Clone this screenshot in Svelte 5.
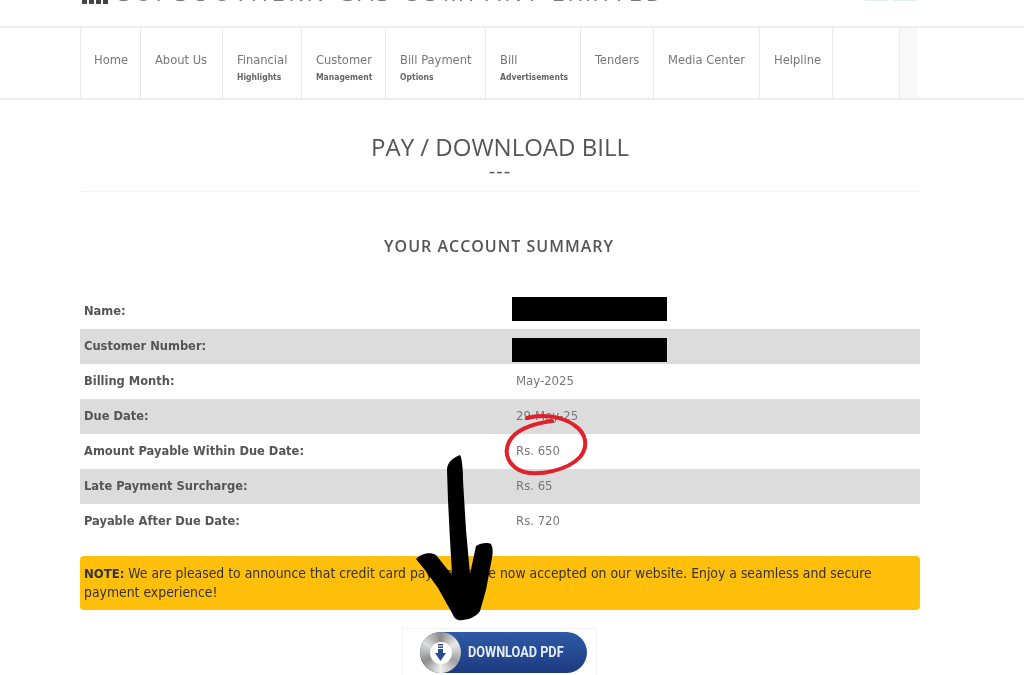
<script>
  const nav = [
    { title: 'Home', width: 60 },
    { title: 'About Us', width: 82 },
    { title: 'Financial', sub: 'Highlights', width: 79 },
    { title: 'Customer', sub: 'Management', width: 84 },
    { title: 'Bill Payment', sub: 'Options', width: 100 },
    { title: 'Bill', sub: 'Advertisements', width: 95 },
    { title: 'Tenders', width: 73 },
    { title: 'Media Center', width: 106 },
    { title: 'Helpline', width: 73 },
    { title: '', width: 67 }
  ];

  const rows = [
    { label: 'Name:', hidden: true },
    { label: 'Customer Number:', hidden: true },
    { label: 'Billing Month:', value: 'May-2025' },
    { label: 'Due Date:', value: '29-May-25' },
    { label: 'Amount Payable Within Due Date:', value: 'Rs. 650' },
    { label: 'Late Payment Surcharge:', value: 'Rs. 65' },
    { label: 'Payable After Due Date:', value: 'Rs. 720' }
  ];
</script>

<div class="page">
  <header class="top">
    <div class="brand">
      <span class="logo"><i></i><i></i><i></i><i></i></span>
      <span class="company">SUI SOUTHERN GAS COMPANY LIMITED</span>
    </div>
    <div class="social"><i></i><i></i></div>
  </header>

  <nav class="nav">
    <ul>
      {#each nav as item}
        <li style:width="{item.width}px">
          <span class="nav-title">{item.title}</span>
          {#if item.sub}<span class="nav-sub">{item.sub}</span>{/if}
        </li>
      {/each}
    </ul>
    <div class="nav-end"></div>
  </nav>

  <main class="content">
    <h1>PAY / DOWNLOAD BILL</h1>
    <div class="dash">---</div>
    <hr />
    <h2>YOUR ACCOUNT SUMMARY</h2>

    <div class="summary">
      {#each rows as row}
        <div class="row">
          <span class="label">{row.label}</span>
          {#if row.hidden}
            <span class="redacted"></span>
          {:else}
            <span class="value">{row.value}</span>
          {/if}
        </div>
      {/each}
    </div>

    <div class="note">
      <b>NOTE:</b> We are pleased to announce that credit card payments are now accepted on our website. Enjoy a seamless and secure payment experience!
    </div>

    <div class="download">
      <a class="pdf" href="#top">
        <span class="disc">
          <span class="disc-inner">
            <svg width="11" height="17" viewBox="0 0 11 17">
              <path d="M3 0h5v1.5H3zM3 2.5h5V4H3zM3 5h5v4h3l-5.5 8L0 9h3z" fill="#2a4a94" />
            </svg>
          </span>
        </span>
        <span class="pdf-text">DOWNLOAD PDF</span>
      </a>
    </div>
  </main>

  <svg class="marks" width="1024" height="675" viewBox="0 0 1024 675">
    <path d="M527 418C542 414 562 416 574 425C586 433 589 446 580 457C568 470 540 476 524 472C509 467 503 454 509 442C515 430 530 424 552 421" fill="none" stroke="#e0212b" stroke-width="4" stroke-linecap="round" />
    <path d="M447 470C447 463 452 458 460 455C462 458 463 470 463 480L466 530L470 574L476 546C480 543 488 542 491 544C493 548 493 552 492 558L486 590L480 611C476 618 464 621 458 620C455 619 454 617 452 613L438 588L425 570L416 559C420 554 430 551 436 555L452 575L450 540L448 500Z" fill="#000" />
  </svg>
</div>

<style>
  :global(body) {
    margin: 0;
    background: #fff;
  }

  .page {
    position: relative;
    width: 1024px;
    height: 675px;
    overflow: hidden;
    font-family: "DejaVu Sans Condensed", "DejaVu Sans", sans-serif;
    font-stretch: condensed;
    color: #555;
    filter: blur(0.4px);
  }

  .top {
    height: 26px;
    box-sizing: border-box;
    padding: 0 107px 0 82px;
    overflow: hidden;
    display: flex;
    justify-content: space-between;
  }

  .brand {
    display: flex;
    align-items: flex-start;
    gap: 10px;
  }

  .logo {
    display: flex;
    gap: 2px;
    width: 26px;
  }

  .logo i {
    width: 5px;
    height: 4px;
    background: #444;
  }

  .company {
    margin-top: -21px;
    font-family: "Open Sans", sans-serif;
    font-stretch: normal;
    font-size: 24px;
    letter-spacing: 3.3px;
    line-height: 26px;
    color: #777;
    white-space: nowrap;
  }

  .social {
    display: flex;
    gap: 4px;
  }

  .social i {
    width: 24px;
    height: 1px;
    background: #e2f0ee;
  }

  .nav {
    height: 74px;
    box-sizing: border-box;
    border-top: 2px solid #eee;
    border-bottom: 2px solid #eee;
    padding-left: 80px;
    display: flex;
  }

  .nav ul {
    list-style: none;
    margin: 0;
    padding: 0;
    display: flex;
    border-left: 1px solid #e8e8e8;
  }

  .nav li {
    box-sizing: border-box;
    padding: 25px 0 0 14px;
    border-right: 1px solid #e8e8e8;
    display: flex;
    flex-direction: column;
    gap: 4px;
  }

  .nav li:first-child {
    padding-left: 13px;
  }

  .nav-end {
    width: 18px;
    background: #f8f8f8;
  }

  .nav-title {
    font-size: 12.8px;
    line-height: 14px;
    color: #777;
    white-space: nowrap;
  }

  .nav-sub {
    font-size: 8.5px;
    font-weight: 700;
    line-height: 12px;
    color: #666;
    white-space: nowrap;
  }

  .content {
    width: 840px;
    margin: 0 0 0 80px;
  }

  h1 {
    margin: 0;
    padding-top: 30px;
    font-family: "Open Sans", sans-serif;
    font-stretch: normal;
    font-size: 24px;
    font-weight: 400;
    line-height: 33px;
    text-align: center;
    color: #555;
  }

  .dash {
    height: 28px;
    font-family: "Open Sans", sans-serif;
    font-stretch: normal;
    font-size: 20px;
    line-height: 16px;
    letter-spacing: 1px;
    text-align: center;
  }

  hr {
    margin: 0;
    border: 0;
    border-top: 1px dotted #eee;
  }

  h2 {
    margin: 0;
    padding: 43px 2px 0 0;
    font-family: "Open Sans", sans-serif;
    font-stretch: normal;
    font-size: 16px;
    font-weight: 600;
    line-height: 22px;
    letter-spacing: 1px;
    text-align: center;
    color: #555;
  }

  .summary {
    margin-top: 37px;
  }

  .row {
    height: 35px;
    box-sizing: border-box;
    display: flex;
    align-items: center;
    padding: 0 0 2px 4px;
    font-size: 13px;
  }

  .row:nth-child(even) {
    background: #dcdcdc;
  }

  .label {
    width: 432px;
    font-size: 12.75px;
    font-weight: 700;
    color: #555;
  }

  .value {
    color: #777;
  }

  .redacted {
    width: 155px;
    height: 24px;
    margin-left: -4px;
    background: #000;
  }

  .row:nth-child(odd) .redacted {
    margin-bottom: 3px;
  }

  .row:nth-child(even) .redacted {
    margin-top: 8px;
  }

  .note {
    margin-top: 17px;
    padding: 8px 4px 9px;
    background: #ffbf0b;
    border-radius: 4px;
    font-size: 13.85px;
    line-height: 18px;
    color: #333;
  }

  .note b {
    font-size: 13px;
  }

  .download {
    margin: 18px 0 0 322px;
    width: 195px;
    height: 50px;
    box-sizing: border-box;
    border: 1px solid #f3f3f3;
    display: flex;
    padding: 3px 0 0 17px;
  }

  .pdf {
    width: 167px;
    height: 41px;
    border-radius: 21px;
    background: linear-gradient(#2f5aa6, #1c3a80);
    display: flex;
    align-items: center;
    text-decoration: none;
  }

  .disc {
    width: 41px;
    height: 41px;
    flex: none;
    border-radius: 50%;
    background: conic-gradient(#8c8c8c, #e8e8e8, #a0a0a0, #f0f0f0, #8c8c8c, #dcdcdc, #8c8c8c);
    display: flex;
    align-items: center;
    justify-content: center;
  }

  .disc-inner {
    width: 22px;
    height: 22px;
    border-radius: 50%;
    background: #fff;
    display: flex;
    align-items: center;
    justify-content: center;
  }

  .pdf-text {
    margin: 0 0 2px 7px;
    font-family: "Roboto", sans-serif;
    font-stretch: normal;
    font-size: 15.5px;
    font-weight: 700;
    color: #e8ecf4;
    white-space: nowrap;
    transform: scaleX(0.82);
    transform-origin: left;
  }

  .marks {
    position: absolute;
    left: 0;
    top: 0;
    pointer-events: none;
  }
</style>
